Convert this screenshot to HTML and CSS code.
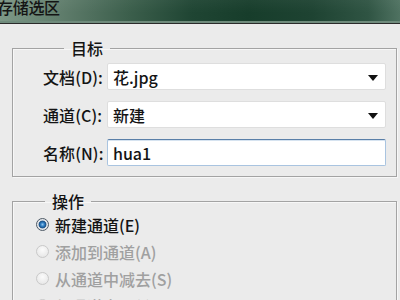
FILE: index.html
```html
<!DOCTYPE html>
<html lang="zh">
<head>
<meta charset="utf-8">
<title>存储选区</title>
<link rel="stylesheet" href="styles.css">
</head>
<body>
<div class="window">
  <div class="titlebar"><span class="title">存储选区</span></div>
  <div class="content">
    <fieldset class="group target">
      <legend>目标</legend>
      <div class="form">
        <label class="lbl">文档(D):</label>
        <div class="field select"><span class="val">花.jpg</span><span class="arrow"></span></div>
        <label class="lbl">通道(C):</label>
        <div class="field select"><span class="val">新建</span><span class="arrow"></span></div>
        <label class="lbl">名称(N):</label>
        <div class="field text focus"><span class="val">hua1</span></div>
      </div>
    </fieldset>
    <fieldset class="group ops">
      <legend>操作</legend>
      <div class="radio-row"><span class="radio checked"></span><span class="rtext">新建通道(E)</span></div>
      <div class="radio-row disabled"><span class="radio"></span><span class="rtext">添加到通道(A)</span></div>
      <div class="radio-row disabled"><span class="radio"></span><span class="rtext">从通道中减去(S)</span></div>
      <div class="radio-row disabled"><span class="radio"></span><span class="rtext">与通道交叉(I)</span></div>
    </fieldset>
  </div>
</div>
</body>
</html>
```
FILE: styles.css
```css
html, body {
  margin: 0;
  padding: 0;
  background: #ebebeb;
}
body {
  width: 400px;
  height: 300px;
  overflow: hidden;
  font-family: "Noto Sans CJK SC", "Noto Sans", sans-serif;
  font-size: 16px;
  font-weight: 500;
  color: #141414;
}
.window {
  width: 400px;
  height: 300px;
  display: flex;
  flex-direction: column;
  overflow: hidden;
}
.titlebar {
  height: 21px;
  background:
    linear-gradient(180deg, rgba(255,255,255,0.04) 0%, rgba(0,0,0,0) 60%),
    linear-gradient(90deg, #7d9887 0%, #627f6e 14%, #3c5f4c 32%, #1f4533 48%, #173d2b 62%, #1e4332 78%, #2f5443 92%, #4f7261 100%);
  border-bottom: 2px solid #6f8b7c;
  box-shadow: 0 1px 0 #2a2a2a;
  overflow: hidden;
  flex: none;
}
.title {
  display: block;
  margin: -4px 0 0 -3px;
  font-size: 16px;
  line-height: 22px;
  color: #141414;
  letter-spacing: -0.3px;
}
.content {
  padding: 15px 3px 0 12px;
}
.group {
  margin: 0;
  border: 1px solid #a3a3a3;
  box-shadow: inset 1px 1px 0 #f7f7f7, 1px 1px 0 #f7f7f7;
  min-width: 0;
}
.group legend {
  margin-left: 21px;
  padding: 0 7px;
  font-size: 16px;
  line-height: 20px;
  height: 20px;
  color: #141414;
}
.target {
  padding: 5px 10px 10px 30px;
}
.form {
  display: grid;
  grid-template-columns: 64px 1fr;
  row-gap: 11px;
  align-items: center;
}
.lbl {
  font-size: 16px;
  line-height: 20px;
  white-space: nowrap;
  letter-spacing: 0.1px;
}
.field {
  height: 25px;
  background: #fff;
  border: 1px solid #dedede;
  border-radius: 2px;
  display: flex;
  align-items: center;
  padding: 0 6px 0 5px;
}
.field.focus {
  border-color: #a9c4e0;
  border-top-color: #5a7fa8;
  box-shadow: inset 0 1px 0 #d6e3f0;
}
.val {
  flex: 1;
  font-size: 16px;
  line-height: 20px;
  color: #141414;
}
.arrow {
  width: 0;
  height: 0;
  border-left: 5px solid transparent;
  border-right: 5px solid transparent;
  border-top: 6px solid #111;
  margin-right: 1px;
  margin-top: 2px;
}
.ops {
  margin-top: 14px;
  padding: 0 10px 10px 11px;
  height: 200px;
}
.radio-row {
  height: 27px;
  display: flex;
  align-items: center;
}
.radio {
  width: 13px;
  height: 13px;
  box-sizing: border-box;
  border-radius: 50%;
  margin-left: 12px;
  margin-right: 6px;
  border: 1px solid #c9c9c9;
  background: radial-gradient(circle at 50% 35%, #fbfbfb 0%, #eaeaea 70%, #dedede 100%);
  flex: none;
}
.radio.checked {
  border: 1px solid #4e5a66;
  background: radial-gradient(circle at 50% 50%, #8fc3ec 0%, #2d7cc1 25%, #1a4f84 45%, #dfe3e8 55%, #f0f0f0 100%);
}
.rtext {
  font-size: 16px;
  line-height: 20px;
  color: #141414;
}
.disabled .rtext {
  color: #a0a0a0;
}
```
